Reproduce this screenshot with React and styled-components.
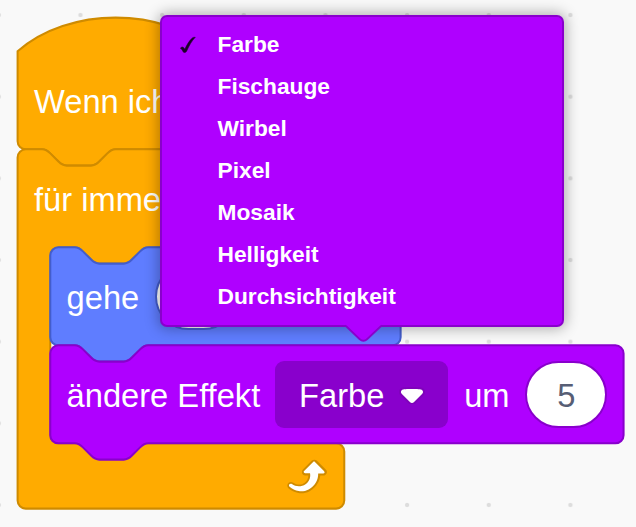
import React from 'react';
import styled, { createGlobalStyle } from 'styled-components';

const K = 49 / 24;

const GlobalStyle = createGlobalStyle`
  body { margin: 0; background: #f9f9f9; overflow: hidden; }
`;

const Workspace = styled.main`
  position: relative;
  width: 636px;
  height: 527px;
  overflow: hidden;
  font-family: "Liberation Sans", Arial, Helvetica, sans-serif;
  background-color: #f9f9f9;
  background-image: radial-gradient(circle at center, #dddddd 1.7px, rgba(221, 221, 221, 0) 2.6px);
  background-size: 81.667px 81.667px;
  background-position: -42px -25.8px;
`;

const BlockBox = styled.section`
  position: absolute;
  left: ${(p) => p.$x}px;
  top: ${(p) => p.$y}px;
`;

const Shape = styled.svg`
  position: absolute;
  inset: 0;
  width: 1px;
  height: 1px;
  overflow: visible;
`;

const Row = styled.div`
  position: relative;
  display: flex;
  align-items: center;
  gap: 16.33px;
  box-sizing: border-box;
  height: 98px;
  padding-left: ${(p) => p.$inset || 16.6}px;
`;

const Label = styled.span`
  font-size: 32.67px;
  line-height: 38px;
  color: #fff;
  white-space: pre;
  padding-top: 3px;
`;

const Select = styled.button`
  display: flex;
  align-items: center;
  gap: 14.7px;
  box-sizing: border-box;
  width: 173px;
  height: 67px;
  margin: 0 -0.3px 0 -1.5px;
  padding: 0 0 0 24px;
  border: 0;
  border-radius: 9px;
  background: #8900cc;
  font: inherit;
`;

const Caret = styled.svg`
  width: 25.95px;
  height: 17.95px;
  margin-top: 3px;
  flex: none;
`;

const NumberField = styled.span`
  display: flex;
  align-items: center;
  justify-content: center;
  box-sizing: border-box;
  width: 82px;
  height: 67px;
  margin: 0 -1px 0 -0.6px;
  padding-top: 3px;
  border: 2px solid ${(p) => p.$edge};
  border-radius: 34px;
  background: #fff;
  color: #575e75;
  font-size: 32.67px;
`;

const LoopIcon = styled.svg`
  position: absolute;
  left: 262px;
  top: 301.5px;
  width: 49px;
  height: 49px;
`;

const Menu = styled.div`
  position: absolute;
  left: 160px;
  top: 15px;
  box-sizing: border-box;
  width: 404px;
  height: 312px;
  padding: 6px 0 8px;
  border: 2px solid #8900cc;
  border-radius: 7px;
  background: #af00ff;
  box-shadow: 0 0 14px 2px rgba(0, 0, 0, 0.3);
`;

const MenuItem = styled.div`
  display: grid;
  grid-template-columns: 55.5px 1fr;
  align-items: center;
  height: 42px;
  color: #fff;
  font-size: 22.75px;
  font-weight: bold;
`;

const Check = styled.svg`
  width: 18px;
  height: 20px;
  margin: 1px 0 0 17px;
`;

const Pointer = styled.svg`
  position: absolute;
  left: 182px;
  top: 307px;
  width: 40px;
  height: 20px;
`;

const TOP_NOTCH = 'M0,4 A4,4 0 0,1 4,0 H12 c2,0 3,1 4,2 l4,4 c1,1 2,2 4,2 h12 c2,0 3,-1 4,-2 l4,-4 c1,-1 2,-2 4,-2';
const BOTTOM_NOTCH = 'c-2,0 -3,1 -4,2 l-4,4 c-1,1 -2,2 -4,2 h-12 c-2,0 -3,-1 -4,-2 l-4,-4 c-1,-1 -2,-2 -4,-2';

const stackPath = (w) =>
  `${TOP_NOTCH} H${w - 4} a4,4 0 0,1 4,4 V44 a4,4 0 0,1 -4,4 H48 ${BOTTOM_NOTCH} H4 a4,4 0 0,1 -4,-4 z`;
const HAT = `M0,0 c25,-22 71,-22 96,0 H176 a4,4 0 0,1 4,4 V44 a4,4 0 0,1 -4,4 H48 ${BOTTOM_NOTCH} H4 a4,4 0 0,1 -4,-4 z`;
const LOOP = `${TOP_NOTCH} H156 a4,4 0 0,1 4,4 V44 a4,4 0 0,1 -4,4 H64 ${BOTTOM_NOTCH} H20 a4,4 0 0,0 -4,4 v88 a4,4 0 0,0 4,4 H156 a4,4 0 0,1 4,4 v24 a4,4 0 0,1 -4,4 H4 a4,4 0 0,1 -4,-4 z`;

function Block({ x, y, path, fill, edge, children }) {
  const left = Math.floor(x);
  const top = Math.floor(y);
  return (
    <BlockBox $x={left} $y={top}>
      <Shape aria-hidden="true">
        <g transform={`translate(${x - left} ${y - top}) scale(${K})`}>
          <path d={path} fill={fill} stroke={edge} />
        </g>
      </Shape>
      {children}
    </BlockBox>
  );
}

const effects = ['Farbe', 'Fischauge', 'Wirbel', 'Pixel', 'Mosaik', 'Helligkeit', 'Durchsichtigkeit'];

export default function App() {
  return (
    <>
      <GlobalStyle />
      <Workspace>
        <Block x={17.6} y={51.3} path={HAT} fill="#ffab00" edge="#cf8b00">
          <Row $inset={17}><Label>Wenn ich</Label></Row>
        </Block>
        <Block x={17.6} y={149.3} path={LOOP} fill="#ffab00" edge="#cf8b00">
          <Row $inset={17}><Label>für immer</Label></Row>
          <LoopIcon viewBox="0 0 24 24">
            <path fill="#cf8b00" d="M23.3,11c-0.3,0.6-0.9,1-1.5,1h-1.6c-0.1,1.3-0.5,2.5-1.1,3.6c-0.9,1.7-2.3,3.2-4.1,4.1c-1.7,0.9-3.6,1.2-5.5,0.9c-1.8-0.3-3.5-1.1-4.9-2.3c-0.7-0.7-0.7-1.9,0-2.6c0.6-0.6,1.6-0.7,2.3-0.2H7c0.9,0.6,1.9,0.9,2.9,0.9s1.9-0.3,2.7-0.9c1.1-0.8,1.8-2.1,1.8-3.5h-1.5c-0.9,0-1.7-0.7-1.7-1.7c0-0.4,0.2-0.9,0.5-1.2l4.4-4.4c0.7-0.6,1.7-0.6,2.4,0L23,9.2C23.5,9.7,23.6,10.4,23.3,11z" />
            <path fill="#fff" d="M21.8,11h-2.6c0,1.5-0.3,2.9-1,4.2c-0.8,1.6-2.1,2.8-3.7,3.6c-1.5,0.8-3.3,1.1-4.9,0.8c-1.6-0.2-3.2-1-4.4-2.1c-0.4-0.3-0.4-0.9-0.1-1.2c0.3-0.4,0.9-0.4,1.2-0.1l0,0c1,0.7,2.2,1.1,3.4,1.1s2.3-0.3,3.3-1c0.9-0.6,1.6-1.5,2-2.6c0.3-0.9,0.4-1.8,0.2-2.8h-2.4c-0.4,0-0.7-0.3-0.7-0.7c0-0.2,0.1-0.3,0.2-0.4l4.4-4.4c0.3-0.3,0.7-0.3,0.9,0L22,9.8c0.3,0.3,0.4,0.6,0.3,0.9S22,11,21.8,11z" />
          </LoopIcon>
        </Block>
        <Block x={50.27} y={247.3} path={stackPath(171.6)} fill="#5f7dff" edge="#435dcc">
          <Row>
            <Label>gehe</Label>
            <NumberField $edge="#435dcc">10</NumberField>
          </Row>
        </Block>
        <Block x={50.27} y={345.3} path={stackPath(280.8)} fill="#af00ff" edge="#8900cc">
          <Row>
            <Label>ändere Effekt</Label>
            <Select>
              <Label>Farbe</Label>
              <Caret viewBox="0 0 12.71 8.79">
                <path opacity="0.1" fill="#231f20" d="M12.71,2.44A2.41,2.41,0,0,1,12,4.16L8.08,8.08a2.45,2.45,0,0,1-3.45,0L0.72,4.16A2.42,2.42,0,0,1,0,2.44,2.48,2.48,0,0,1,.71.71C1,0.47,1.43,0,6.36,0S11.75,0.46,12,.71A2.44,2.44,0,0,1,12.71,2.44Z" />
                <path fill="#fff" d="M6.36,7.79a1.43,1.43,0,0,1-1-.42L1.42,3.45a1.44,1.44,0,0,1,0-2c0.56-.56,9.31-0.56,9.87,0a1.44,1.44,0,0,1,0,2L7.37,7.37A1.43,1.43,0,0,1,6.36,7.79Z" />
              </Caret>
            </Select>
            <Label>um</Label>
            <NumberField $edge="#8900cc">5</NumberField>
          </Row>
        </Block>
        <Menu>
          {effects.map((name, i) => (
            <MenuItem key={name}>
              {i === 0 ? (
                <Check viewBox="0 0 18 20">
                  <path fill="#1c0029" stroke="#1c0029" strokeOpacity="0.6" strokeWidth="0.9" strokeLinejoin="round" d="M1.4,13.2 C2.4,11.9 4,11.6 4.7,12.7 L5.8,14.2 C8,9.6 10.6,5 13.6,2.8 C14.4,2.2 15.2,2.1 16.3,2.3 C12.8,5.8 10.2,10.5 7.7,16 C6.8,17.8 4.8,18 4.1,16.8 C3.3,15.2 2.8,13.9 1.4,13.2 Z" />
                </Check>
              ) : <span />}
              <span>{name}</span>
            </MenuItem>
          ))}
          <Pointer viewBox="0 0 40 20">
            <path fill="#af00ff" d="M1,0 L2.5,2.5 L15.5,15.2 Q19.4,19 23.3,15.2 L36.5,2.5 L38,0 Z" />
            <path fill="none" stroke="#8900cc" strokeWidth="1.8" d="M1,1.5 L2.5,2.5 L15.5,15 Q19.4,18.6 23.3,15 L36.5,2.5 L38,1.5" />
          </Pointer>
        </Menu>
      </Workspace>
    </>
  );
}
